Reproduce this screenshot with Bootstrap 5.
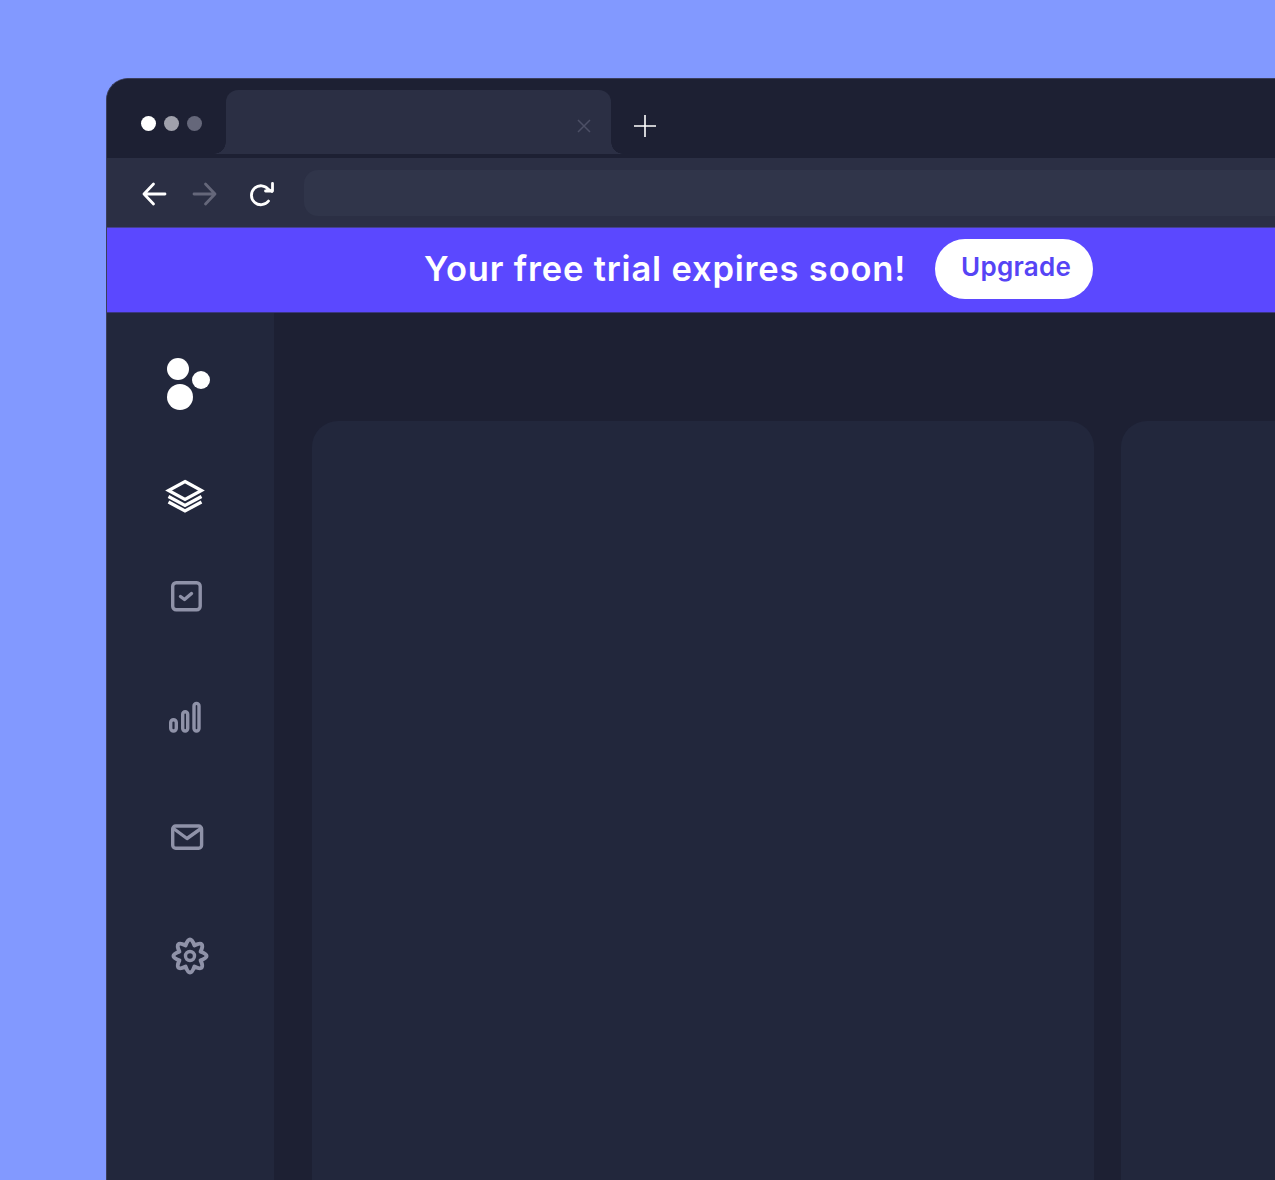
<!DOCTYPE html>
<html lang="en">
<head>
    <meta charset="UTF-8">
    <meta name="viewport" content="width=device-width, initial-scale=1.0">
    <title>Free trial</title>
    <link rel="stylesheet" href="https://cdn.jsdelivr.net/npm/bootstrap@5.3.2/dist/css/bootstrap.min.css">
    <style>
        html, body { height: 100%; }
        body { background: #8299ff; overflow: hidden; font-family: Inter, "Liberation Sans", sans-serif; padding: 78px 0 0 106px; }
        .app-window { width: 1400px; height: 1200px; background: #1d2033; border: 1px solid #3a3e5c; border-right: 0; border-bottom: 0; border-top-left-radius: 22px; overflow: hidden; }
        .tab-strip { height: 79px; background: #1d2033; padding: 11px 0 0 34px; }
        .traffic { gap: 8px; width: 85px; padding-top: 15px; height: 48px; }
        .traffic span { width: 15px; height: 15px; border-radius: 50%; background: #fff; margin-top: 11px; }
        .traffic span:nth-child(2) { background: #a0a1ac; }
        .traffic span:nth-child(3) { background: #65677a; }
        .browser-tab { position: relative; width: 385px; height: 64px; background: #2b2f44; border-radius: 12px 12px 0 0; }
        .browser-tab::before, .browser-tab::after { content: ""; position: absolute; bottom: 0; width: 12px; height: 12px; }
        .browser-tab::before { left: -12px; background: radial-gradient(circle at 0 0, transparent 11.5px, #2b2f44 12px); }
        .browser-tab::after { right: -12px; background: radial-gradient(circle at 100% 0, transparent 11.5px, #2b2f44 12px); }
        .tab-close { right: 19px; top: 28px; }
        .new-tab { margin: 25px 0 0 23px; }
        .tool-bar { height: 69px; background: #2b2f44; padding: 0 0 0 34px; }
        .tool-icons { width: 163px; padding-top: 3px; }
        .tool-forward { margin-left: 25px; }
        .tool-reload { margin-left: 30px; }
        .address-box { width: 1100px; height: 46px; margin-top: 1px; background: #30354a; border-radius: 14px; }
        .promo-bar { height: 86px; background: #5b48ff; padding-left: 317px; gap: 29px; border-top: 1px solid #45408f; border-bottom: 1px solid #3a3680; }
        .promo-text { color: #fff; font-size: 34.5px; font-weight: 600; letter-spacing: .82px; line-height: 1; margin: -1px 0 0; }
        .upgrade-btn { width: 158px; height: 60px; margin-top: -2px; border: 0; border-radius: 30px; background: #fff; color: #5644f5; font-size: 26px; font-weight: 600; letter-spacing: .27px; padding: 0 0 5px 4px; }
        .upgrade-btn:hover { background: #fff; color: #5644f5; }
        .side-rail { width: 167px; flex: none; background: #22273c; position: relative; }
        .rail-icon { position: absolute; display: block; }
        .board { padding: 108px 0 0 38px; gap: 27px; }
        .board-panel { width: 782px; height: 900px; background: #22273c; border-radius: 26px; }
    </style>
</head>
<body>
    <div class="app-window d-flex flex-column">
        <div class="tab-strip d-flex flex-shrink-0">
            <div class="traffic d-flex flex-shrink-0 align-items-start">
                <span></span><span></span><span></span>
            </div>
            <div class="browser-tab flex-shrink-0">
                <svg class="position-absolute tab-close" width="16" height="16" viewBox="0 0 16 16" fill="none" stroke="#4c4f65" stroke-width="1.5"><path d="M2 2l12 12M14 2L2 14"/></svg>
            </div>
            <svg class="new-tab flex-shrink-0" width="22" height="22" viewBox="0 0 22 22" fill="none" stroke="#fff" stroke-width="1.6"><path d="M11 0v22M0 11h22"/></svg>
        </div>

        <div class="tool-bar d-flex align-items-center flex-shrink-0">
            <div class="tool-icons d-flex align-items-center flex-shrink-0">
                <svg width="26" height="26" viewBox="0 0 26 26" fill="none" stroke="#fff" stroke-width="2.8" stroke-linecap="round" stroke-linejoin="round"><path d="M24 13H3M12.500 3L3 13l9.500 10"/></svg>
                <svg class="tool-forward" width="26" height="26" viewBox="0 0 26 26" fill="none" stroke="#65677a" stroke-width="2.8" stroke-linecap="round" stroke-linejoin="round"><path d="M2 13h21M13.500 3L23 13l-9.500 10"/></svg>
                <svg class="tool-reload" width="26" height="26" viewBox="0 0 26 26" fill="none" stroke="#fff" stroke-width="2.8" stroke-linecap="round" stroke-linejoin="round"><path d="M20.500 20A9.500 9.500 0 1 1 20.500 8.500L24 10.500M24.500 2.500v7.500h-7"/></svg>
            </div>
            <div class="address-box flex-shrink-0"></div>
        </div>

        <div class="promo-bar d-flex align-items-center flex-shrink-0">
            <p class="promo-text">Your free trial expires soon!</p>
            <button class="btn upgrade-btn flex-shrink-0" type="button">Upgrade</button>
        </div>

        <div class="d-flex flex-grow-1">
            <div class="side-rail">
                <svg class="rail-icon" style="left:58px;top:43px" width="46" height="54" viewBox="0 0 46 54" fill="#fff"><circle cx="13" cy="13" r="11"/><circle cx="36" cy="24" r="9"/><circle cx="15" cy="41" r="13"/></svg>
                <svg class="rail-icon" style="left:58px;top:165px" width="40" height="36" viewBox="0 0 40 36" fill="none" stroke="#fff" stroke-width="3.2"><path d="M20 3.500L36.500 12.500 20 21.500 3.500 12.500z"/><path d="M3.500 18.500l16.500 9 16.500-9M3.500 24l16.500 9 16.500-9"/></svg>
                <svg class="rail-icon" style="left:62px;top:266px" width="34" height="34" viewBox="0 0 34 34" fill="none" stroke="#8f92a8" stroke-width="3.4" stroke-linecap="round" stroke-linejoin="round"><rect x="3.700" y="3.700" width="27.500" height="27" rx="3.500"/><path d="M11.500 17.500l4 3 7-6"/></svg>
                <svg class="rail-icon" style="left:60px;top:387px" width="36" height="34" viewBox="0 0 36 34" fill="none" stroke="#8f92a8" stroke-width="3.4"><rect x="3.700" y="19.700" width="5.600" height="11.300" rx="2.800"/><rect x="15.700" y="11.700" width="5" height="19.300" rx="2.500"/><rect x="27" y="3.400" width="5" height="27.600" rx="2.500"/></svg>
                <svg class="rail-icon" style="left:62px;top:510px" width="36" height="30" viewBox="0 0 36 30" fill="none" stroke="#8f92a8" stroke-width="3.4" stroke-linecap="round" stroke-linejoin="round"><rect x="3.700" y="3" width="28.900" height="22.300" rx="3"/><path d="M4.500 5.500L18 15.500 32 5.500"/></svg>
                <svg class="rail-icon" style="left:63px;top:623px" width="40" height="40" viewBox="0 0 40 40" fill="none" stroke="#8f92a8" stroke-width="4" stroke-linejoin="round"><path d="M30.620 15.600Q42.400 20 30.620 24.400Q35.840 35.840 24.400 30.620Q20 42.400 15.600 30.620Q4.160 35.840 9.380 24.400Q-2.400 20 9.380 15.600Q4.160 4.160 15.600 9.380Q20 -2.400 24.400 9.380Q35.840 4.160 30.620 15.600z"/><circle cx="20" cy="20" r="4.500" stroke-width="3.400"/></svg>
            </div>
            <div class="board d-flex flex-grow-1">
                <div class="board-panel flex-shrink-0"></div>
                <div class="board-panel flex-shrink-0"></div>
            </div>
        </div>
    </div>
    <script src="https://cdn.jsdelivr.net/npm/bootstrap@5.3.2/dist/js/bootstrap.bundle.min.js"></script>
</body>
</html>
